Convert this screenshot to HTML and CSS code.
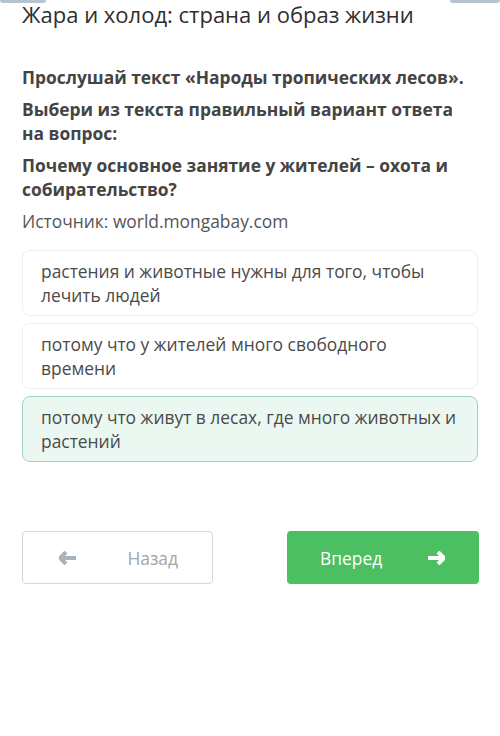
FILE: index.html
```html
<!DOCTYPE html>
<html lang="ru">
<head>
  <meta charset="UTF-8" />
  <meta name="viewport" content="width=device-width, initial-scale=1" />
  <title>Жара и холод</title>
  <link rel="stylesheet" href="styles.css">
</head>
<body>

  <div class="tabs">
    <span class="tab left"></span>
    <span class="tab right"></span>
  </div>

  <header>
    <h1>Жара и холод: страна и образ жизни</h1>
  </header>

  <main>
    <p class="task">Прослушай текст «Народы тропических лесов».</p>
    <p class="task">Выбери из текста правильный вариант ответа на вопрос:</p>
    <p class="task">Почему основное занятие у жителей – охота и собирательство?</p>
    <p class="source">Источник: world.mongabay.com</p>

    <div class="options">
      <div class="option">растения и животные нужны для того, чтобы лечить людей</div>
      <div class="option">потому что у жителей много свободного времени</div>
      <div class="option selected">потому что живут в лесах, где много животных и растений</div>
    </div>

    <div class="nav">
      <button class="btn back">
        <svg width="18" height="14" viewBox="0 0 18 14"><path d="M7 1 L1 7 L7 13 M1.5 7 H17" fill="none" stroke="currentColor" stroke-width="4" stroke-linejoin="round"/></svg>
        <span>Назад</span>
      </button>
      <button class="btn next">
        <span>Вперед</span>
        <svg width="18" height="14" viewBox="0 0 18 14"><path d="M11 1 L17 7 L11 13 M16.5 7 H1" fill="none" stroke="currentColor" stroke-width="4" stroke-linejoin="round"/></svg>
      </button>
    </div>
  </main>

</body>
</html>
```

FILE: styles.css
```css
:root {
  --text: #3a3a3a;
  --muted: #555;
  --green: #4cbf63;
  --line: #eceef0;
}

body {
  margin: 0;
  font-family: "Open Sans", "Noto Sans", sans-serif;
  background: #fff;
  color: var(--text);
}

.tabs {
  display: flex;
  justify-content: space-between;
  height: 3px;
}

.tab {
  display: block;
  background: #b7c4cf;
  border-radius: 0 0 3px 3px;
}

.tab.left { width: 46px; }
.tab.right { width: 50px; }

header {
  padding: 0 22px;
}

h1 {
  margin: -4px 0 0;
  font-size: 22px;
  font-weight: 400;
  line-height: 30px;
  color: #2e2e2e;
}

main {
  padding: 36px 22px 0;
}

.task {
  margin: 0 0 8px;
  font-size: 17.4px;
  font-weight: 700;
  line-height: 24px;
  color: #444;
}

.source {
  margin: 0;
  font-size: 17.4px;
  line-height: 24px;
  color: var(--muted);
}

.options {
  display: flex;
  flex-direction: column;
  gap: 7px;
  margin-top: 17px;
}

.option {
  border: 1px solid var(--line);
  border-radius: 8px;
  padding: 8px 18px;
  font-size: 17.4px;
  line-height: 24px;
  color: #4a4a4a;
  min-height: 48px;
}

.option.selected {
  background: #ebf8f1;
  border-color: #9fd3bb;
}

.nav {
  display: flex;
  justify-content: space-between;
  margin: 69px -1px 0 0;
}

.btn {
  display: flex;
  align-items: center;
  width: 192px;
  height: 53px;
  border-radius: 4px;
  font-family: inherit;
  font-size: 17.4px;
  cursor: pointer;
}

.btn.back {
  width: 191px;
  background: #fff;
  border: 1px solid #d3d7da;
  color: #a9b3bd;
  padding: 0 34px 0 36px;
  justify-content: space-between;
}

.btn.back span { color: #a0a6ac; }

.btn.next {
  background: var(--green);
  border: none;
  color: #fff;
  padding: 0 34px 0 33px;
  justify-content: space-between;
}
```
